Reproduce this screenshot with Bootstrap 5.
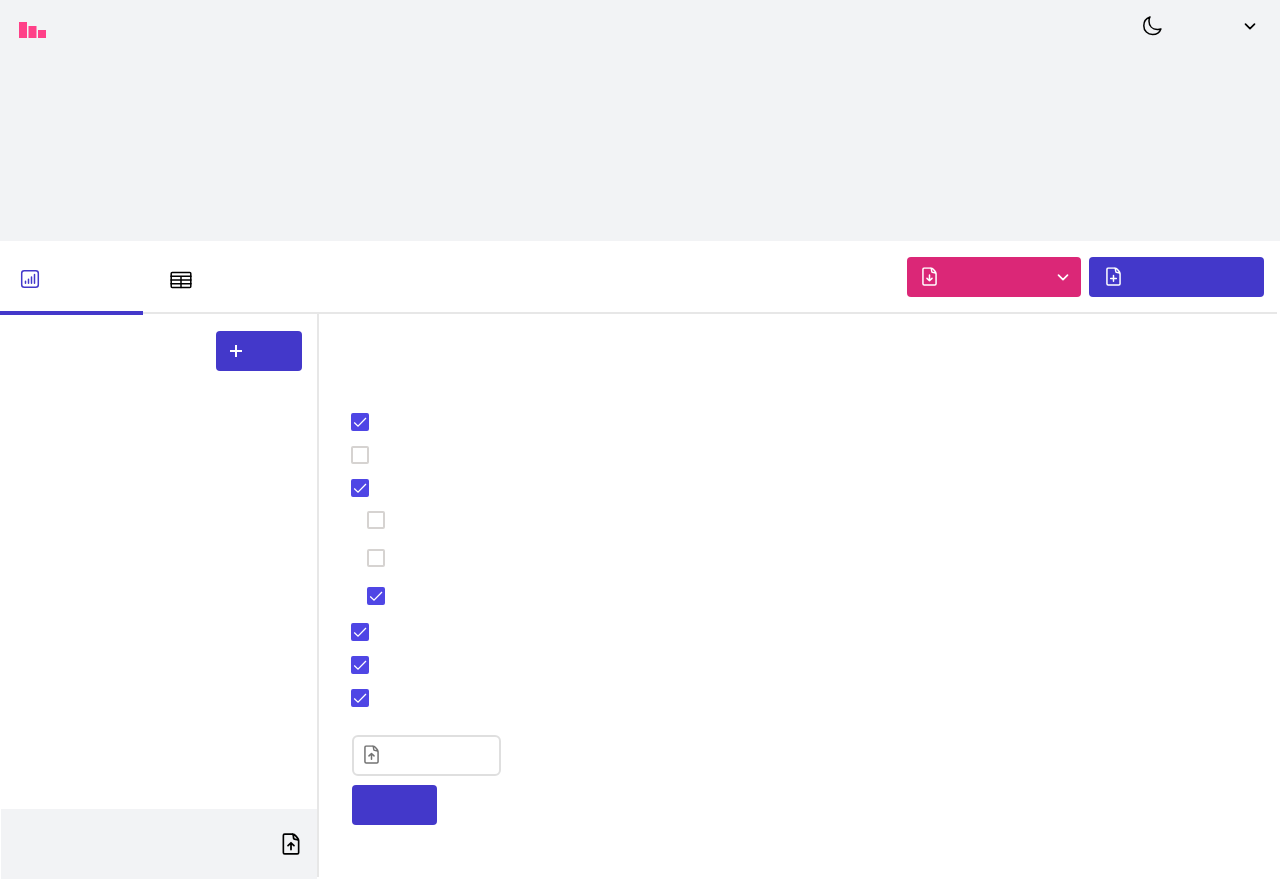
<!DOCTYPE html>
<html lang="en">
<head>
<meta charset="utf-8">
<meta name="viewport" content="width=device-width, initial-scale=1">
<title>Workspace</title>
<link href="https://cdn.jsdelivr.net/npm/bootstrap@5.3.0/dist/css/bootstrap.min.css" rel="stylesheet">
<style>
  body { font-family: "Liberation Sans", sans-serif; background: #fff; color: #000; }
  svg { display: block; flex: none; fill: none; stroke: currentColor; stroke-linecap: round; stroke-linejoin: round; }
  .btn { --bs-btn-border-radius: 4px; --bs-btn-border-width: 0; --bs-btn-color: #000; height: 40px; }
  .hero { background: #f2f3f5; height: 241px; }
  .topbar { height: 52px; padding: 0 19px; }
  .topbar-actions { gap: 74px; }
  .topbar .btn { height: 24px; }
  .tabbar { height: 71px; padding-right: 16px; }
  .tab-item { width: 143px; padding: 4px 20px 0; color: #000; }
  .tab-item + .tab-item { padding-left: 27px; padding-top: 6px; }
  .tab-item.active { color: #4338ca; }
  .tab-line { height: 2px; background: #e7e7e7; margin-right: 3px; }
  .tab-line span { display: block; position: relative; top: -1px; width: 143px; height: 4px; background: #4338ca; }
  .btn-indigo, .btn-indigo:hover { background: #4338ca; color: #fff; }
  .btn-pink, .btn-pink:hover { background: #db2777; color: #fff; }
  .export-btn { width: 174px; padding: 0 12px 0 15px; }
  .create-btn { width: 175px; padding: 0 17px; }
  .sidebar { width: 319px; flex: none; border-right: 2px solid #e7e7e7; margin-bottom: 2px; }
  .sidebar-top { padding: 17px 15px; }
  .add-btn { width: 86px; padding: 0 14px; }
  .sidebar-foot { height: 70px; margin: 0 0 -2px 1px; background: #f2f3f5; padding: 0 17px; }
  .panel { padding: 99px 32px 32px; }
  .options { margin-bottom: 28px; }
  .options > li { margin-bottom: 15px; }
  .options .form-check-input { display: block; float: none; margin: 0; width: 18px; height: 18px; border: 2px solid #d6d3d1; border-radius: 2px; background-color: #fff; }
  .options .form-check-input:checked { border-color: #4f46e5; background-color: #4f46e5; background-origin: border-box; background-size: 18px 18px;
    background-image: url("data:image/svg+xml,%3Csvg xmlns='http://www.w3.org/2000/svg' viewBox='0 0 18 18'%3E%3Cpath d='M3.2 9.5 7 13.2 15 5' fill='none' stroke='%23fff' stroke-width='1.3'/%3E%3C/svg%3E"); }
  .options > li.parent { margin-bottom: 18px; }
  .suboptions { margin-top: 14px; padding-left: 16px; gap: 20px; }
  .form-actions { padding-left: 1px; gap: 9px; }
  .upload-btn, .upload-btn:hover { --bs-btn-border-radius: 6px; width: 149px; height: 41px; padding: 0 10px 2px; border: 2px solid #dfdfdf; color: #737373; background: #fff; }
  .save-btn { width: 85px; }
</style>
</head>
<body class="d-flex flex-column min-vh-100">
<svg class="d-none" aria-hidden="true">
  <symbol id="file" viewBox="0 0 16 20"><path d="M9.500 1H2.300Q1 1 1 2.300V17.700Q1 19 2.300 19H13.700Q15 19 15 17.700V7.500Q15 5.500 13.500 4L12.500 2.800Q11 1 9.500 1ZM9.500 1Q10.300 2 10.300 4Q10.300 5.700 12 5.700Q14.300 5.700 15 7"/></symbol>
  <symbol id="chevron" viewBox="0 0 12 8"><path d="M1.500 2.200 6 6.700 10.500 2.200"/></symbol>
</svg>

<header class="hero">
  <nav class="topbar d-flex align-items-center justify-content-between" aria-label="Main">
    <a href="#" aria-label="Home" class="pt-2">
      <svg width="27" height="16" viewBox="0 0 27 16" style="fill:#ff4088;stroke:none"><path d="M0 0h8v16H0zM9.500 4h8v12h-8zM19 8h8v8h-8z"/></svg>
    </a>
    <div class="topbar-actions d-flex align-items-center">
      <button class="btn p-0" type="button" aria-label="Dark mode">
        <svg width="26" height="24" viewBox="0 0 26 24" stroke-width="1.500"><path d="M11 3C7.200 4.300 4.800 7.600 4.800 11.700C4.800 16.900 8.700 20.500 13.600 20.500C17.700 20.500 20.800 18.200 21.900 15C20.500 15.500 19.400 15.600 18.200 15.500C13.400 15.200 10 12 10 7.200C10 5.700 10.300 4.300 11 3Z"/></svg>
      </button>
      <button class="btn p-0 px-1" type="button" aria-label="Account menu">
        <svg width="14" height="8" stroke-width="1.700"><use href="#chevron" width="12" height="8" x="1"/></svg>
      </button>
    </div>
  </nav>
</header>

<div class="tabbar d-flex align-items-center justify-content-between">
  <nav class="d-flex" aria-label="Views">
    <a class="tab-item active" href="#" aria-label="Charts" aria-current="page">
      <svg width="20" height="20" viewBox="0 0 20 20" stroke-width="1.500"><rect x="1.700" y="1.700" width="16.600" height="16.600" rx="2.500"/><path d="M5.500 14.300v-2M8.500 14.300v-4M11.500 14.300V8M14.500 14.300V5.500"/></svg>
    </a>
    <a class="tab-item" href="#" aria-label="Tables">
      <svg width="22" height="18" viewBox="0 0 22 18" stroke-width="1.500"><rect x="1.200" y="1.500" width="19.600" height="15" rx="1"/><path d="M1 5.200h20M1 9h20M1 12.800h20M11 5.200v11.300"/></svg>
    </a>
  </nav>
  <div class="d-flex gap-2">
    <button class="btn btn-pink export-btn d-flex align-items-center justify-content-between" type="button" aria-label="Export">
      <svg width="15" height="19" viewBox="0 0 16 20" stroke-width="1.600"><use href="#file" width="16" height="20"/><path d="M8 8.500v6M5.300 12 8 14.600 10.700 12"/></svg>
      <svg width="12" height="8" stroke-width="1.700"><use href="#chevron" width="12" height="8"/></svg>
    </button>
    <button class="btn btn-indigo create-btn d-flex align-items-center" type="button" aria-label="Create">
      <svg width="15" height="19" viewBox="0 0 16 20" stroke-width="1.600"><use href="#file" width="16" height="20"/><path d="M8 9v6M5 12h6"/></svg>
    </button>
  </div>
</div>
<div class="tab-line"><span></span></div>

<div class="d-flex flex-grow-1">
  <aside class="sidebar d-flex flex-column justify-content-between">
    <div class="sidebar-top d-flex justify-content-end">
      <button class="btn btn-indigo add-btn d-flex align-items-center" type="button" aria-label="Add">
        <svg width="12" height="12" viewBox="0 0 12 12" stroke-width="2" style="stroke-linecap:butt"><path d="M6 0v12M0 6h12"/></svg>
      </button>
    </div>
    <div class="sidebar-foot d-flex align-items-center justify-content-end">
      <button class="btn p-0 d-flex align-items-center" type="button" aria-label="Upload file">
        <svg width="18" height="22" viewBox="0 0 16 20" stroke-width="1.600"><use href="#file" width="16" height="20"/><path d="M8 15V9M5.300 11.500 8 8.900 10.700 11.500"/></svg>
      </button>
    </div>
  </aside>

  <main class="panel flex-grow-1">
    <form>
      <ul class="options list-unstyled">
        <li><input class="form-check-input" type="checkbox" aria-label="Option 1" checked></li>
        <li><input class="form-check-input" type="checkbox" aria-label="Option 2"></li>
        <li class="parent"><input class="form-check-input" type="checkbox" aria-label="Option 3" checked>
          <ul class="suboptions list-unstyled d-flex flex-column">
            <li><input class="form-check-input" type="checkbox" aria-label="Option 3a"></li>
            <li><input class="form-check-input" type="checkbox" aria-label="Option 3b"></li>
            <li><input class="form-check-input" type="checkbox" aria-label="Option 3c" checked></li>
          </ul>
        </li>
        <li><input class="form-check-input" type="checkbox" aria-label="Option 4" checked></li>
        <li><input class="form-check-input" type="checkbox" aria-label="Option 5" checked></li>
        <li><input class="form-check-input" type="checkbox" aria-label="Option 6" checked></li>
      </ul>
      <div class="form-actions d-flex flex-column align-items-start">
        <button class="btn upload-btn d-flex align-items-center" type="button" aria-label="Choose file">
          <svg width="15" height="19" viewBox="0 0 16 20" stroke-width="1.600"><use href="#file" width="16" height="20"/><path d="M8 15V9M5.300 11.500 8 8.900 10.700 11.500"/></svg>
        </button>
        <button class="btn btn-indigo save-btn" type="submit" aria-label="Save"></button>
      </div>
    </form>
  </main>
</div>
<script src="https://cdn.jsdelivr.net/npm/bootstrap@5.3.0/dist/js/bootstrap.bundle.min.js"></script>
</body>
</html>
